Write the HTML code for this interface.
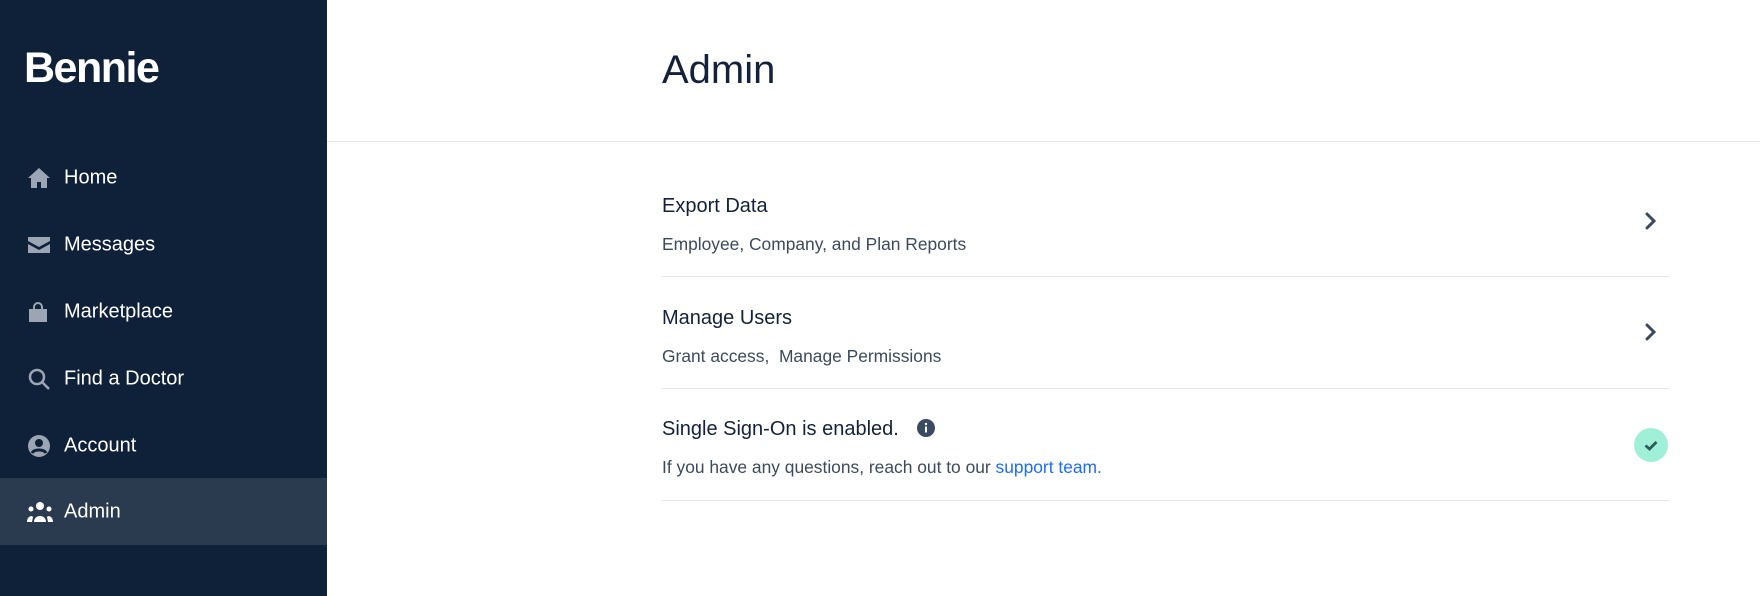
<!DOCTYPE html>
<html><head><meta charset="utf-8"><style>
*{margin:0;padding:0;box-sizing:border-box}
body{width:1760px;height:596px;overflow:hidden;background:#fff;font-family:"Liberation Sans",sans-serif;position:relative}
.side{position:absolute;left:0;top:0;width:327px;height:596px;background:#0f2139}
.logo{position:absolute;left:24px;top:44px;color:#fff;font-weight:bold;font-size:43px;letter-spacing:-1.5px}
.nav{position:absolute;left:0;width:327px;height:67px;color:#fff;font-size:20px}
.nav span{position:absolute;left:64px;top:50%;transform:translateY(-50%)}
.nav svg{position:absolute;left:27px;top:50%;transform:translateY(-50%)}
.act{background:#2b3b4f}
.h1{position:absolute;left:662px;top:48px;font-size:40px;color:#14213a}
.hline{position:absolute;left:327px;right:0;top:141px;height:1px;background:#e4e6ea}
.t{position:absolute;left:662px;font-size:20px;color:#14213a}
.s{position:absolute;left:662px;font-size:17.4px;color:#3d4a5c}
.d{position:absolute;left:662px;width:1007px;height:1px;background:#e4e6ea}
.chev{position:absolute;left:1643px}
</style></head><body>
<div class="side">
<div class="logo">Bennie</div>
<div class="nav" style="top:144px"><svg width="24" height="22" viewBox="0 0 24 22"><path d="M12 1L1 11h3v10h6v-6h4v6h6V11h3z" fill="#9ca5b3"/></svg><span>Home</span></div>
<div class="nav" style="top:211px"><svg width="24" height="18" viewBox="0 0 24 18"><path d="M1 1h22v4L12 11 1 5z M1 8l11 6 11-6v9H1z" fill="#9ca5b3"/></svg><span>Messages</span></div>
<div class="nav" style="top:278px"><svg width="22" height="22" viewBox="0 0 22 22"><path d="M7 8V6a4 4 0 018 0v2" stroke="#9ca5b3" stroke-width="2" fill="none"/><rect x="2" y="8" width="18" height="13" fill="#9ca5b3"/></svg><span>Marketplace</span></div>
<div class="nav" style="top:345px"><svg width="24" height="24" viewBox="0 0 24 24"><circle cx="10" cy="10" r="7" stroke="#9ca5b3" stroke-width="2.5" fill="none"/><path d="M15 15l7 7" stroke="#9ca5b3" stroke-width="2.5"/></svg><span>Find a Doctor</span></div>
<div class="nav" style="top:412px"><svg width="24" height="24" viewBox="0 0 24 24"><circle cx="12" cy="12" r="11" fill="#9ca5b3"/><circle cx="12" cy="9" r="4" fill="#0f2139"/><path d="M5 19c2-4 12-4 14 0" stroke="#0f2139" stroke-width="3" fill="none"/></svg><span>Account</span></div>
<div class="nav act" style="top:478px"><svg width="26" height="22" viewBox="0 0 26 22"><circle cx="13" cy="5" r="4" fill="#fff"/><circle cx="4" cy="8" r="2.5" fill="#fff"/><circle cx="22" cy="8" r="2.5" fill="#fff"/><path d="M7 21c0-8 12-8 12 0z M0 21c0-6 5-7 6-5l-1 5z M26 21c0-6-5-7-6-5l1 5z" fill="#fff"/></svg><span>Admin</span></div>
</div>
<div class="h1">Admin</div>
<div class="hline"></div>
<div class="t" style="top:195px">Export Data</div>
<div class="s" style="top:234px">Employee, Company, and Plan Reports</div>
<div class="d" style="top:276px"></div>
<svg class="chev" style="top:211px" width="16" height="20" viewBox="0 0 16 20"><path d="M4 3l7 7-7 7" stroke="#3a4a60" stroke-width="3" fill="none" stroke-linecap="round"/></svg>
<div class="t" style="top:307px">Manage Users</div>
<div class="s" style="top:346px">Grant access,&nbsp; Manage Permissions</div>
<div class="d" style="top:388px"></div>
<svg class="chev" style="top:322px" width="16" height="20" viewBox="0 0 16 20"><path d="M4 3l7 7-7 7" stroke="#3a4a60" stroke-width="3" fill="none" stroke-linecap="round"/></svg>
<div class="t" style="top:418px">Single Sign-On is enabled.</div>
<svg style="position:absolute;left:917px;top:419px" width="18" height="18" viewBox="0 0 18 18"><circle cx="9" cy="9" r="9" fill="#3a4a60"/><rect x="8" y="7.5" width="2" height="6" fill="#fff"/><circle cx="9" cy="5" r="1.2" fill="#fff"/></svg>
<div class="s" style="top:457px">If you have any questions, reach out to our <span style="color:#1a6dff">support team.</span></div>
<div class="d" style="top:500px"></div>
<svg style="position:absolute;left:1634px;top:428px" width="34" height="34" viewBox="0 0 34 34"><circle cx="17" cy="17" r="17" fill="#9ff0d6"/><path d="M11.5 17.5l4 3.5 7-7" stroke="#2d5a5a" stroke-width="2.8" fill="none"/></svg>
</body></html>
